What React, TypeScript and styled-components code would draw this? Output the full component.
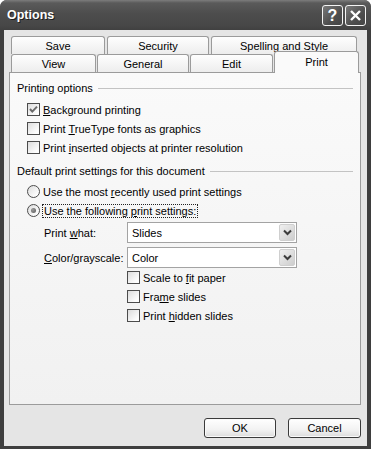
import styled, { createGlobalStyle } from 'styled-components';

const GlobalStyle = createGlobalStyle`
  html, body {
    margin: 0;
    padding: 0;
    background: #fff;
  }
  body {
    font-family: "Liberation Sans", Arial, sans-serif;
    font-size: 11px;
    color: #000;
  }
`;

const topTabs = [
    { label: 'Save', width: 94 },
    { label: 'Security', width: 102 },
    { label: 'Spelling and Style', width: 146 },
];

const bottomTabs = [
    { label: 'View', width: 85 },
    { label: 'General', width: 92 },
    { label: 'Edit', width: 83 },
    { label: 'Print', width: 85, active: true },
];

const Check = () => (
    <svg width="11" height="11" viewBox="0 0 11 11">
        <path d="M2 5 L4.3 7.6 L9 2.6" fill="none" stroke="#6b6b6b" strokeWidth="2" />
    </svg>
);

const Chevron = () => (
    <svg width="9" height="7" viewBox="0 0 9 7">
        <path d="M1 1.5 L4.5 5 L8 1.5" fill="none" stroke="#3c3c3c" strokeWidth="2" />
    </svg>
);

const App = () => {
    return (
        <>
            <GlobalStyle />
            <Window>
                <TitleBar>
                    <Title>Options</Title>
                    <CaptionGroup>
                        <CaptionButton>?</CaptionButton>
                        <CaptionButton>
                            <svg width="13" height="13" viewBox="0 0 13 13">
                                <path d="M2 2 L11 11 M11 2 L2 11" stroke="#fff" strokeWidth="2.4" />
                            </svg>
                        </CaptionButton>
                    </CaptionGroup>
                </TitleBar>
                <Client>
                    <TabStrip>
                        <TabRow $gap={2}>
                            {topTabs.map(t => (
                                <Tab key={t.label} $width={t.width}>{t.label}</Tab>
                            ))}
                        </TabRow>
                        <TabRow $gap={1}>
                            {bottomTabs.map(t => (
                                <Tab key={t.label} $width={t.width} $active={t.active}>{t.label}</Tab>
                            ))}
                        </TabRow>
                    </TabStrip>
                    <Panel>
                        <GroupHeader>
                            <span>Printing options</span>
                            <Rule />
                        </GroupHeader>
                        <OptionList $top={5}>
                            <OptionRow>
                                <Box $checked><Check /></Box>
                                <span><u>B</u>ackground printing</span>
                            </OptionRow>
                            <OptionRow>
                                <Box />
                                <span>Print <u>T</u>rueType fonts as graphics</span>
                            </OptionRow>
                            <OptionRow>
                                <Box />
                                <span>Print <u>i</u>nserted objects at printer resolution</span>
                            </OptionRow>
                        </OptionList>

                        <GroupHeader $top={8}>
                            <span>Default print settings for this document</span>
                            <Rule />
                        </GroupHeader>
                        <OptionList $top={4}>
                            <OptionRow>
                                <Radio />
                                <span>Use the most <u>r</u>ecently used print settings</span>
                            </OptionRow>
                            <OptionRow>
                                <Radio $checked><Dot /></Radio>
                                <Focus>Use the following <u>p</u>rint settings:</Focus>
                            </OptionRow>
                        </OptionList>

                        <Settings>
                            <FieldRow>
                                <FieldLabel>Print <u>w</u>hat:</FieldLabel>
                                <Select>
                                    <span>Slides</span>
                                    <ArrowButton><Chevron /></ArrowButton>
                                </Select>
                            </FieldRow>
                            <FieldRow>
                                <FieldLabel><u>C</u>olor/grayscale:</FieldLabel>
                                <Select>
                                    <span>Color</span>
                                    <ArrowButton><Chevron /></ArrowButton>
                                </Select>
                            </FieldRow>
                            <SubOptions>
                                <OptionRow>
                                    <Box />
                                    <span>Scale to <u>f</u>it paper</span>
                                </OptionRow>
                                <OptionRow>
                                    <Box />
                                    <span>Fra<u>m</u>e slides</span>
                                </OptionRow>
                                <OptionRow>
                                    <Box />
                                    <span>Print <u>h</u>idden slides</span>
                                </OptionRow>
                            </SubOptions>
                        </Settings>
                    </Panel>
                    <ButtonRow>
                        <PushButton $width={72}>OK</PushButton>
                        <PushButton $width={73}>Cancel</PushButton>
                    </ButtonRow>
                </Client>
            </Window>
        </>
    );
}

export default App;

const Window = styled.div`
    width: 371px;
    height: 449px;
    box-sizing: border-box;
    display: flex;
    flex-direction: column;
    background: #3e3e3e;
    border-radius: 7px 7px 0 0;
    overflow: hidden;
`

const TitleBar = styled.div`
    height: 30px;
    flex: none;
    display: flex;
    align-items: center;
    padding: 0 5px 0 7px;
    background: linear-gradient(#7c7c7c 0, #5a5a5a 3px, #4d4d4d 45%, #474747 85%, #404040 100%);
`

const Title = styled.span`
    flex: 1;
    color: #fff;
    font-weight: bold;
    font-size: 12.5px;
    text-shadow: 1px 1px 0 #1e1e1e;
    padding-bottom: 1px;
`

const CaptionGroup = styled.div`
    display: flex;
    gap: 2px;
    margin-top: 1px;
`

const CaptionButton = styled.div`
    width: 21px;
    height: 21px;
    box-sizing: border-box;
    border: 1px solid #f4f4f4;
    border-radius: 3px;
    background: linear-gradient(135deg, #7a7a7a, #4e4e4e 60%, #454545);
    color: #fff;
    font-weight: bold;
    font-size: 16px;
    display: flex;
    align-items: center;
    justify-content: center;
`

const Client = styled.div`
    flex: 1;
    margin: 0 4px 3px 4px;
    background: #e5e5e5;
    display: flex;
    flex-direction: column;
    padding: 6px 6px 8px 5px;
    box-sizing: border-box;
    min-height: 0;
`

const TabStrip = styled.div`
    display: flex;
    flex-direction: column;
    padding-left: 2px;
`

const TabRow = styled.div<{ $gap: number }>`
    display: flex;
    height: 18px;
    align-items: flex-start;
    gap: ${p => p.$gap}px;
`

const Tab = styled.div<{ $width: number; $active?: boolean }>`
    width: ${p => p.$width}px;
    height: ${p => (p.$active ? 22 : 18)}px;
    margin-top: ${p => (p.$active ? -3 : 0)}px;
    box-sizing: border-box;
    border: 1px solid #9b9b9b;
    border-bottom: none;
    border-radius: 3px 3px 0 0;
    background: ${p => (p.$active ? '#fafafa' : 'linear-gradient(#fefefe, #ededed)')};
    z-index: ${p => (p.$active ? 2 : 1)};
    display: flex;
    justify-content: center;
    align-items: ${p => (p.$active ? 'flex-start' : 'center')};
    padding-top: ${p => (p.$active ? 4 : 1)}px;
    white-space: nowrap;
`

const Panel = styled.div`
    flex: 1;
    border: 1px solid #9b9b9b;
    background: linear-gradient(#fafafa, #f1f1f1);
    padding: 9px 7px 0 7px;
    display: flex;
    flex-direction: column;
    min-height: 0;
`

const GroupHeader = styled.div<{ $top?: number }>`
    display: flex;
    align-items: center;
    gap: 5px;
    height: 13px;
    line-height: 13px;
    margin-top: ${p => p.$top || 0}px;
    white-space: nowrap;
`

const Rule = styled.div`
    flex: 1;
    height: 1px;
    background: #c3c3c3;
`

const OptionList = styled.div<{ $top: number }>`
    display: flex;
    flex-direction: column;
    padding-left: 10px;
    margin-top: ${p => p.$top}px;
`

const OptionRow = styled.div`
    display: flex;
    align-items: center;
    gap: 3px;
    height: 19px;
    white-space: nowrap;
`

const Box = styled.span<{ $checked?: boolean }>`
    width: 13px;
    height: 13px;
    box-sizing: border-box;
    border: 1px solid #4c4c4c;
    background: linear-gradient(135deg, #dcdcdc, #fdfdfd 80%);
    display: flex;
    align-items: center;
    justify-content: center;
    flex: none;
`

const Radio = styled(Box)`
    border-radius: 50%;
`

const Dot = styled.span`
    width: 5px;
    height: 5px;
    border-radius: 50%;
    background: radial-gradient(circle at 35% 35%, #9a9a9a, #5a5a5a);
`

const Focus = styled.span`
    outline: 1px dotted #222;
    outline-offset: 0px;
    padding: 0 1px;
    line-height: 12px;
`

const Settings = styled.div`
    display: flex;
    flex-direction: column;
    padding-left: 27px;
    margin-top: 2px;
    gap: 4px;
`

const FieldRow = styled.div`
    display: flex;
    align-items: center;
    height: 21px;
`

const FieldLabel = styled.span`
    width: 83px;
    flex: none;
    white-space: nowrap;
`

const Select = styled.div`
    width: 170px;
    height: 21px;
    box-sizing: border-box;
    border: 1px solid #a3a3a3;
    background: #fff;
    display: flex;
    align-items: center;
    justify-content: space-between;
    padding: 0 1px 0 4px;
`

const ArrowButton = styled.div`
    width: 16px;
    height: 17px;
    box-sizing: border-box;
    border: 1px solid #cfcfcf;
    border-radius: 2px;
    background: linear-gradient(135deg, #f0f0f0, #cdcdcd);
    display: flex;
    align-items: center;
    justify-content: center;
`

const SubOptions = styled.div`
    display: flex;
    flex-direction: column;
    padding-left: 83px;
    margin-top: -4px;
`

const ButtonRow = styled.div`
    display: flex;
    justify-content: flex-end;
    gap: 12px;
    margin-top: 13px;
`

const PushButton = styled.div<{ $width: number }>`
    width: ${p => p.$width}px;
    height: 20px;
    box-sizing: border-box;
    border: 1px solid #3a3a3a;
    border-radius: 3px;
    background: linear-gradient(#ffffff, #f2f2f2 60%, #dcdcdc);
    box-shadow: inset 0 0 0 1px #fafafa;
    display: flex;
    align-items: center;
    justify-content: center;
`
